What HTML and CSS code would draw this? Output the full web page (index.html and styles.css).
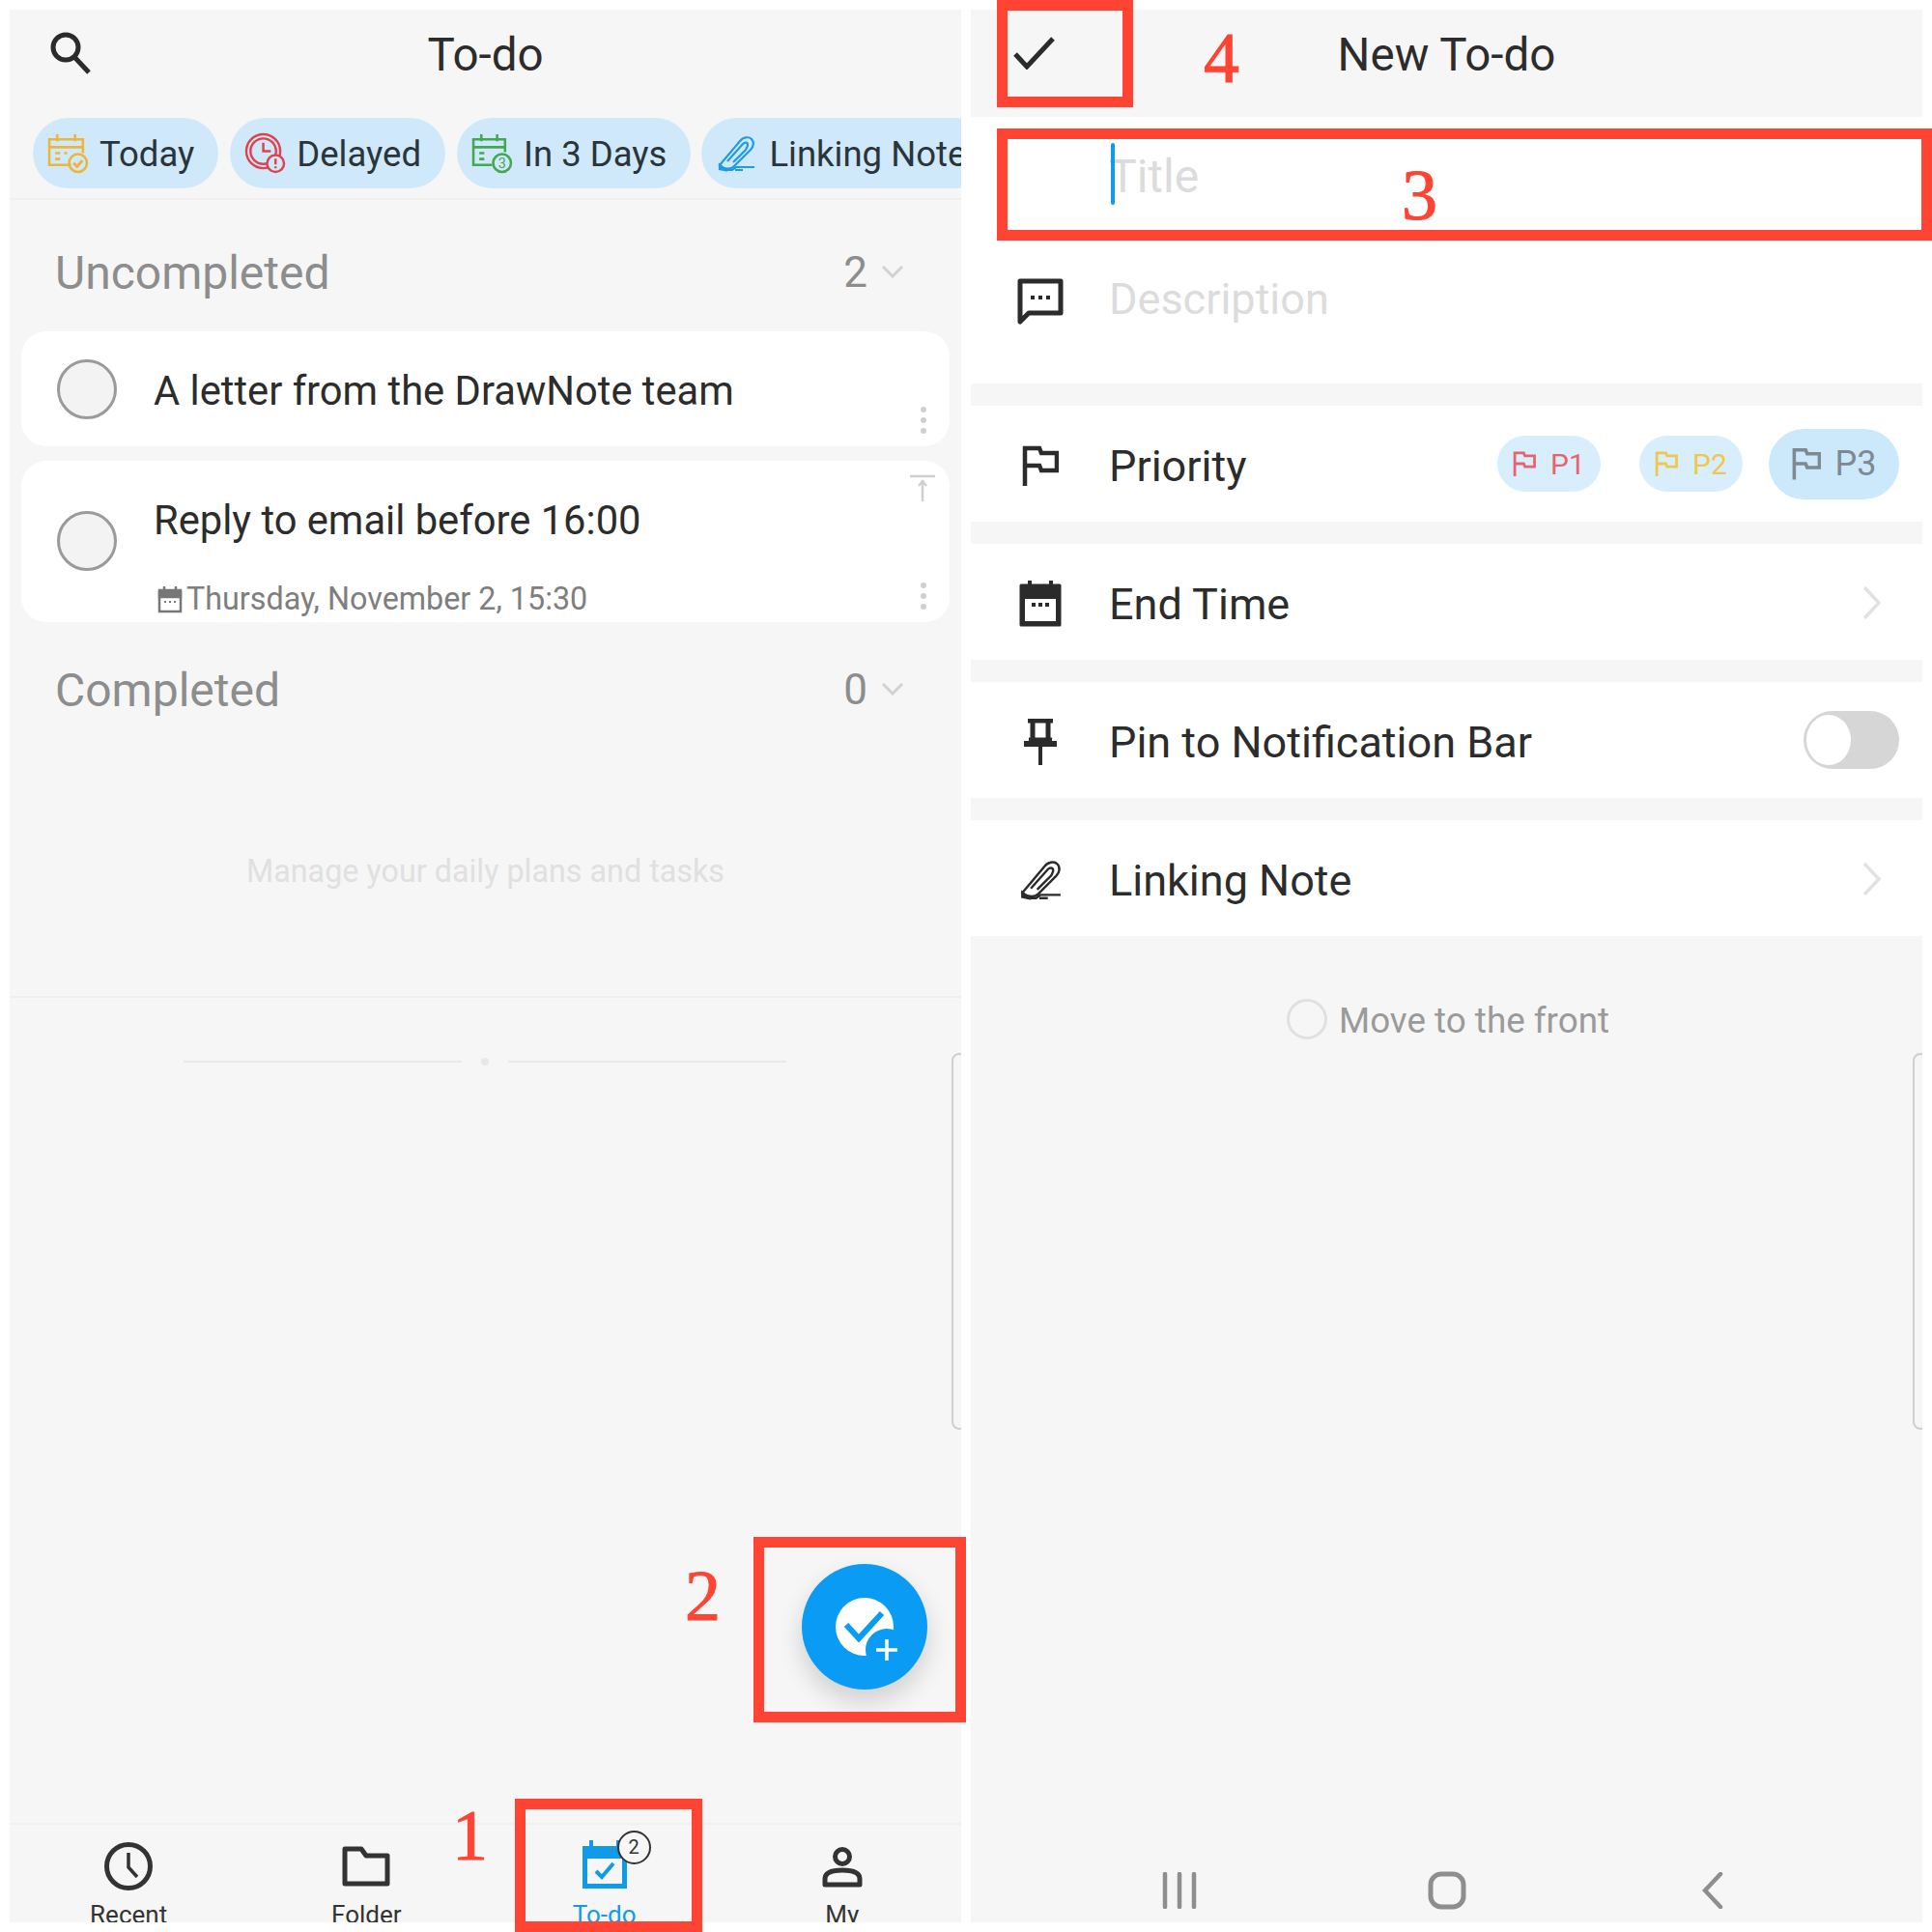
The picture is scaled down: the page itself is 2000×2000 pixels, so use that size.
FILE: index.html
```html
<!DOCTYPE html>
<html lang="en">
<head>
    <meta charset="UTF-8">
    <meta name="viewport" content="width=device-width, initial-scale=1.0">
    <title>To-do</title>
    <link rel="stylesheet" href="styles.css">
</head>
<body>
    <!-- To-do list screen -->
    <div class="panel">
        <div class="top-bar">
            <svg class="search-icon" width="44" height="44" viewBox="0 0 44 44" fill="none" stroke="#2b2b2b" stroke-width="5"><circle cx="16" cy="16" r="13"/><path d="M25 26l15 16"/></svg>
            <h1 class="top-title">To-do</h1>
        </div>
        <div class="chips">
            <div class="chip">
                <svg width="43" height="43" viewBox="0 0 42 42" fill="none" stroke="#ecb63a" stroke-width="2.5"><path d="M24 33H2V7h34v14M2 15h34M10 2v7M28 2v7M8 21h5M8 27h5M17 21h3"/><circle cx="31" cy="31" r="9"/><path d="M26.500 31l3.500 3.500 5.500-6" stroke-width="3"/></svg>
                <span>Today</span>
            </div>
            <div class="chip">
                <svg width="43" height="43" viewBox="0 0 44 44" fill="none" stroke="#e0414f" stroke-width="2.500"><circle cx="20" cy="20" r="18"/><circle cx="20" cy="20" r="13.500"/><path d="M20 11v9h8"/><circle cx="33" cy="33" r="9" fill="#cfe9fb"/><path d="M33 28v6M33 36v2"/></svg>
                <span>Delayed</span>
            </div>
            <div class="chip">
                <svg width="43" height="43" viewBox="0 0 42 42" fill="none" stroke="#43a84f" stroke-width="2.500"><path d="M21 33H2V7h32v13M2 15h32M10 2v7M26 2v7M8 21h5M8 27h5"/><circle cx="31" cy="31" r="9"/><text x="31" y="36" class="chip-three">3</text></svg>
                <span>In 3 Days</span>
            </div>
            <div class="chip chip-note">
                <svg width="40" height="38" viewBox="0 0 40 38" fill="none" stroke="#1e9be6" stroke-width="2.200"><path d="M3 31L24 6c3-4 9-5 12-2 3 3 2 8-1 11L18 32c-3 3-9 4-15-1z"/><path d="M11 27L27 9c2-2 5-2 5 1 0 2-1 3-2 5L17 28"/><path d="M3 31l5 5-5-1z" fill="#1e9be6"/><path d="M8 36h8l4-3h19M19 36h8"/></svg>
                <span>Linking Note</span>
            </div>
        </div>

        <div class="list-area">
            <div class="section-head section-first">
                <span class="section-name">Uncompleted</span>
                <span class="section-count">2</span>
                <svg class="section-arrow" width="24" height="14" viewBox="0 0 24 14" fill="none" stroke="#d2d2d2" stroke-width="3"><path d="M2 2l10 10L22 2"/></svg>
            </div>

            <div class="task task-short">
                <span class="task-circle"></span>
                <div class="task-body">
                    <div class="task-text">A letter from the DrawNote team</div>
                </div>
                <span class="kebab"><i></i><i></i><i></i></span>
            </div>

            <div class="task task-tall">
                <span class="task-circle"></span>
                <div class="task-body">
                    <div class="task-text">Reply to email before 16:00</div>
                    <div class="task-date">
                        <svg width="26" height="30" viewBox="0 0 26 30" fill="none" stroke="#777" stroke-width="2.500"><path d="M2 8h22v20H2z"/><path d="M2 6h22v7H2z" fill="#777"/><path d="M7 2v5M19 2v5"/><path d="M7 18h2M12 18h2M17 18h2" stroke-width="2"/></svg>
                        <span>Thursday, November 2, 15:30</span>
                    </div>
                </div>
                <svg class="move-top" width="26" height="28" viewBox="0 0 26 28" fill="none" stroke="#d0d0d0" stroke-width="2.500"><path d="M0 2h26M13 28V8M9 12l4-5 4 5"/></svg>
                <span class="kebab"><i></i><i></i><i></i></span>
            </div>

            <div class="section-head section-second">
                <span class="section-name">Completed</span>
                <span class="section-count">0</span>
                <svg class="section-arrow" width="24" height="14" viewBox="0 0 24 14" fill="none" stroke="#d2d2d2" stroke-width="3"><path d="M2 2l10 10L22 2"/></svg>
            </div>

            <p class="empty-hint">Manage your daily plans and tasks</p>
            <div class="list-line"></div>
            <div class="end-mark"><span></span><i></i><span></span></div>
        </div>

        <div class="tabbar">
            <div class="tab">
                <svg width="50" height="50" viewBox="0 0 50 50" fill="none" stroke="#333" stroke-width="5"><circle cx="25" cy="25" r="22.500"/><path d="M25 11v15l9 10" stroke-width="3.500"/></svg>
                <span>Recent</span>
            </div>
            <div class="tab">
                <svg width="50" height="50" viewBox="0 0 50 50" fill="none" stroke="#333" stroke-width="5"><path d="M3 7h17l5 7h22v29H3z" stroke-linejoin="round"/></svg>
                <span>Folder</span>
            </div>
            <div class="tab tab-active">
                <svg width="50" height="52" viewBox="0 0 50 52" fill="none"><path d="M11 1v8M39 1v8" stroke="#0f9be8" stroke-width="4"/><path d="M2 7h46v44H2z" fill="#0f9be8"/><path d="M7 20h36v26H7z" fill="#f6f6f6"/><path d="M16 33l6 6 12-14" stroke="#0f9be8" stroke-width="4"/></svg>
                <span>To-do</span>
                <b class="tab-badge">2</b>
            </div>
            <div class="tab tab-me">
                <svg width="42" height="42" viewBox="0 0 42 42" fill="none" stroke="#333" stroke-width="5"><circle cx="21" cy="10" r="7.500"/><path d="M3 39v-6c0-5 5-9 18-9s18 4 18 9v6z" stroke-linejoin="round"/></svg>
                <span>My</span>
            </div>
        </div>

        <div class="fab">
            <svg width="130" height="130" viewBox="0 0 130 130" fill="none"><circle cx="65" cy="65" r="30" fill="#fff"/><path d="M46 63l13 14 24-26" stroke="#0a9cf5" stroke-width="6"/><circle cx="88" cy="89" r="22" fill="#0a9cf5"/><path d="M88 78v22M77 89h22" stroke="#fff" stroke-width="3.500"/></svg>
        </div>
        <span class="edge-handle"></span>
    </div>

    <!-- New to-do screen -->
    <div class="panel">
        <div class="top-bar">
            <svg class="save-icon" width="44" height="34" viewBox="0 0 44 34" fill="none" stroke="#2b2b2b" stroke-width="5"><path d="M2 18l12 13L41 2"/></svg>
            <h1 class="top-title">New To-do</h1>
        </div>

        <div class="form-head">
            <div class="title-field"><span class="caret"></span><span class="muted">Title</span></div>
            <div class="form-line"></div>
            <div class="desc-row">
                <svg width="48" height="48" viewBox="0 0 48 48" fill="none" stroke="#2b2b2b" stroke-width="5"><path d="M3 3h42v33H12l-9 9z" stroke-linejoin="round"/><path d="M14 20h4M22 20h4M30 20h4" stroke-width="4"/></svg>
                <span class="muted">Description</span>
            </div>
        </div>

        <div class="form-row">
            <span class="row-icon"><svg width="38" height="42" viewBox="0 0 38 42" fill="none" stroke="#2b2b2b" stroke-width="4.500"><path d="M3 42V3h15l2 5h16v18H20l-2-5H3"/></svg></span>
            <span class="row-label">Priority</span>
            <div class="prio-group">
                <span class="prio prio-red"><svg width="24" height="26" viewBox="0 0 38 42" fill="none" stroke="currentColor" stroke-width="4.500"><path d="M3 42V3h15l2 5h16v18H20l-2-5H3"/></svg>P1</span>
                <span class="prio prio-yellow"><svg width="24" height="26" viewBox="0 0 38 42" fill="none" stroke="currentColor" stroke-width="4.500"><path d="M3 42V3h15l2 5h16v18H20l-2-5H3"/></svg>P2</span>
                <span class="prio prio-gray"><svg width="30" height="34" viewBox="0 0 38 42" fill="none" stroke="currentColor" stroke-width="4.500"><path d="M3 42V3h15l2 5h16v18H20l-2-5H3"/></svg>P3</span>
            </div>
        </div>

        <div class="form-row">
            <span class="row-icon"><svg width="44" height="48" viewBox="0 0 44 48" fill="none"><path d="M11 0v8M33 0v8" stroke="#2b2b2b" stroke-width="4"/><path d="M2 5h40v41H2z" fill="#2b2b2b" stroke="#2b2b2b" stroke-width="3" stroke-linejoin="round"/><path d="M6 19h32v23H6z" fill="#fff"/><path d="M13 25h4M20 25h4M27 25h4" stroke="#2b2b2b" stroke-width="4"/></svg></span>
            <span class="row-label">End Time</span>
            <svg class="row-chevron" width="20" height="34" viewBox="0 0 20 34" fill="none" stroke="#e2e2e2" stroke-width="3.500"><path d="M2 1l15 16L2 33"/></svg>
        </div>

        <div class="form-row">
            <span class="row-icon"><svg width="36" height="48" viewBox="0 0 36 48" fill="none" stroke="#2b2b2b"><path d="M5 2h26" stroke-width="5"/><path d="M10 2v18M26 2v18" stroke-width="5"/><path d="M1 26h34" stroke-width="6"/><path d="M6 22h24" stroke-width="5"/><path d="M18 26v22" stroke-width="4"/></svg></span>
            <span class="row-label">Pin to Notification Bar</span>
            <span class="toggle"><span class="toggle-knob"></span></span>
        </div>

        <div class="form-row form-row-last">
            <span class="row-icon"><svg width="44" height="42" viewBox="0 0 40 38" fill="none" stroke="#2b2b2b" stroke-width="2.200"><path d="M3 31L24 6c3-4 9-5 12-2 3 3 2 8-1 11L18 32c-3 3-9 4-15-1z"/><path d="M11 27L27 9c2-2 5-2 5 1 0 2-1 3-2 5L17 28"/><path d="M3 31l5 5-5-1z" fill="#2b2b2b"/><path d="M8 36h8l4-3h19M19 36h8"/></svg></span>
            <span class="row-label">Linking Note</span>
            <svg class="row-chevron" width="20" height="34" viewBox="0 0 20 34" fill="none" stroke="#e2e2e2" stroke-width="3.500"><path d="M2 1l15 16L2 33"/></svg>
        </div>

        <div class="front-option"><span class="front-circle"></span><span class="front-text">Move to the front</span></div>

        <div class="navbar">
            <svg width="36" height="38" viewBox="0 0 36 38" fill="none" stroke="#8e8e8e" stroke-width="4.500" stroke-linecap="round"><path d="M3 2v34M18 2v34M33 2v34"/></svg>
            <svg class="nav-home" width="40" height="40" viewBox="0 0 40 40" fill="none" stroke="#8e8e8e" stroke-width="5"><rect x="3" y="3" width="34" height="34" rx="11"/></svg>
            <svg width="22" height="38" viewBox="0 0 22 38" fill="none" stroke="#8e8e8e" stroke-width="4.500" stroke-linecap="round"><path d="M19 2L3 19l16 17"/></svg>
        </div>
        <span class="edge-handle"></span>
    </div>

    <!-- Red tutorial marks drawn over the screenshots -->
    <div class="mark mark-tab"></div>
    <div class="mark mark-fab"></div>
    <div class="mark mark-title"></div>
    <div class="mark mark-save"></div>
    <span class="mark-num num-1">1</span>
    <span class="mark-num num-2">2</span>
    <span class="mark-num num-3">3</span>
    <span class="mark-num num-4">4</span>
</body>
</html>
```

FILE: styles.css
```css
* {
    box-sizing: border-box;
}
body {
    position: relative;
    display: flex;
    gap: 10px;
    width: 2000px;
    height: 2000px;
    margin: 0;
    padding: 10px;
    overflow: hidden;
    font-family: Roboto, "Liberation Sans", sans-serif;
    background-color: #fff;
    color: #2c2c2c;
}
.panel {
    position: relative;
    display: flex;
    flex-direction: column;
    width: 985px;
    height: 1980px;
    overflow: hidden;
    background-color: #f6f6f6;
}
svg {
    display: block;
    flex-shrink: 0;
}

/* header */
.top-bar {
    position: relative;
    display: flex;
    align-items: center;
    justify-content: center;
    flex-shrink: 0;
    height: 111px;
}
.top-title {
    margin: 0 0 18px;
    font-size: 47.5px;
    font-weight: 400;
    color: #2c2c2c;
}
.search-icon {
    position: absolute;
    left: 42px;
    top: 23px;
}
.save-icon {
    position: absolute;
    left: 44px;
    top: 28px;
}

/* chips */
.chips {
    display: flex;
    gap: 12px;
    flex-shrink: 0;
    padding: 1px 0 0 24px;
    height: 86px;
    border-bottom: 2px solid #f0f0f0;
}
.chip {
    display: flex;
    align-items: center;
    flex-shrink: 0;
    gap: 11px;
    height: 73px;
    padding: 0 25px 0 15px;
    border-radius: 37px;
    background-color: #cfe9fb;
    font-size: 36.5px;
    color: #2a343b;
}
.chip span {
    margin-top: 2px;
}
.chip-note {
    gap: 14px;
    margin-left: -1px;
    padding-left: 16px;
}
.chip-three {
    font-family: Roboto, sans-serif;
    font-size: 14px;
    text-anchor: middle;
    fill: #43a84f;
    stroke: none;
}

/* task list */
.list-area {
    display: flex;
    flex-direction: column;
}
.section-head {
    display: flex;
    align-items: center;
    height: 50px;
    padding: 0 59px 0 47px;
    color: #8d8d8d;
}
.section-first {
    margin-top: 50px;
}
.section-second {
    margin-top: 45px;
}
.section-name {
    flex: 1;
    font-size: 48px;
}
.section-count {
    margin-right: 14px;
    font-size: 44px;
}
.section-arrow {
    margin-bottom: 2px;
}
.task {
    position: relative;
    display: flex;
    margin: 0 12px;
    padding-left: 37px;
    border-radius: 26px;
    background-color: #fff;
}
.task-short {
    margin-top: 36px;
    height: 119px;
}
.task-tall {
    margin-top: 15px;
    height: 167px;
}
.task-circle {
    flex-shrink: 0;
    width: 62px;
    height: 62px;
    border: 3px solid #9a9a9a;
    border-radius: 50%;
    background-color: #f3f3f3;
}
.task-short .task-circle {
    margin-top: 29px;
}
.task-tall .task-circle {
    margin-top: 52px;
}
.task-body {
    margin-left: 38px;
}
.task-text {
    font-size: 41.7px;
    line-height: 50px;
    white-space: nowrap;
}
.task-short .task-text {
    margin-top: 37px;
}
.task-tall .task-text {
    margin-top: 37px;
}
.task-date {
    display: flex;
    align-items: center;
    gap: 4px;
    margin: 37px 0 0 4px;
    font-size: 32.3px;
    color: #7e7e7e;
}
.kebab {
    position: absolute;
    right: 24px;
    bottom: 13px;
    display: flex;
    flex-direction: column;
    gap: 5px;
}
.kebab i {
    width: 6px;
    height: 6px;
    border-radius: 50%;
    background-color: #cfcfcf;
}
.move-top {
    position: absolute;
    right: 15px;
    top: 14px;
}
.empty-hint {
    margin: 143px 0 0;
    font-size: 32.3px;
    line-height: 40px;
    text-align: center;
    color: #e0e0e0;
}
.list-line {
    height: 2px;
    margin-top: 109px;
    background-color: #eeeeee;
}
.end-mark {
    display: flex;
    align-items: center;
    gap: 20px;
    margin: 62px 0 0 180px;
}
.end-mark span {
    width: 288px;
    height: 2px;
    background-color: #e8e8e8;
}
.end-mark i {
    width: 8px;
    height: 8px;
    border-radius: 50%;
    background-color: #e8e8e8;
}

/* bottom tabs */
.tabbar {
    position: relative;
    display: flex;
    flex-shrink: 0;
    height: 103px;
    margin-top: auto;
    border-top: 2px solid #f0f0f0;
}
.tab {
    position: relative;
    display: flex;
    flex-direction: column;
    align-items: center;
    flex: 1;
    padding-top: 18px;
    font-size: 26px;
    color: #333;
}
.tab span {
    position: absolute;
    top: 78px;
    line-height: 30px;
}
.tab-active {
    padding-top: 15px;
    color: #0f9be8;
}
.tab-me {
    padding-top: 23px;
}
.tab-badge {
    position: absolute;
    left: 136px;
    top: 6px;
    width: 35px;
    height: 35px;
    border: 2px solid #333;
    border-radius: 50%;
    background-color: #f6f6f6;
    font-size: 20px;
    font-weight: 400;
    line-height: 31px;
    text-align: center;
    color: #333;
}
.fab {
    position: absolute;
    left: 820px;
    top: 1609px;
    width: 130px;
    height: 130px;
    border-radius: 50%;
    background-color: #0a9cf5;
    box-shadow: 0 12px 26px rgba(0, 0, 0, 0.16);
}
.edge-handle {
    position: absolute;
    right: -6px;
    top: 1080px;
    width: 16px;
    height: 390px;
    border: 2px solid #cfcfcf;
    border-radius: 14px;
}

/* new to-do form */
.form-head {
    flex-shrink: 0;
    height: 276px;
    background-color: #fff;
}
.title-field {
    position: relative;
    display: flex;
    align-items: center;
    height: 122px;
    padding: 0 0 0 143px;
    font-size: 48px;
}
.caret {
    position: absolute;
    left: 145px;
    top: 27px;
    width: 4px;
    height: 64px;
    border-radius: 2px;
    background-color: #0f9be8;
}
.muted {
    color: #dcdcdc;
}
.form-line {
    height: 2px;
    margin: 0 49px;
    background-color: #eeeeee;
}
.desc-row {
    display: flex;
    align-items: center;
    gap: 47px;
    padding: 38px 0 0 48px;
    font-size: 45px;
}
.desc-row svg {
    margin-top: 4px;
}
.form-row {
    display: flex;
    align-items: center;
    flex-shrink: 0;
    height: 120px;
    margin-top: 23px;
    padding-right: 24px;
    background-color: #fff;
    font-size: 45px;
}
.row-icon {
    display: flex;
    justify-content: center;
    width: 143px;
    padding-top: 4px;
}
.row-label {
    flex: 1;
    padding-top: 4px;
}
.row-chevron {
    margin: 2px 18px 0 0;
}
.prio-group {
    display: flex;
    align-items: center;
    gap: 40px;
}
.prio {
    display: flex;
    align-items: center;
    justify-content: center;
    gap: 15px;
    width: 107px;
    height: 58px;
    border-radius: 29px;
    background-color: #d9eefc;
    font-size: 30px;
}
.prio-red {
    color: #e8636f;
}
.prio-yellow {
    color: #edc84f;
}
.prio-gray {
    width: 135px;
    height: 73px;
    margin-left: -13px;
    border-radius: 37px;
    background-color: #cce8fb;
    font-size: 36px;
    color: #7d8a92;
}
.toggle {
    display: flex;
    align-items: center;
    width: 99px;
    height: 60px;
    padding-left: 3px;
    border-radius: 30px;
    background-color: #d6d6d6;
}
.toggle-knob {
    width: 46px;
    height: 52px;
    border-radius: 50%;
    background-color: #fff;
}
.front-option {
    display: flex;
    align-items: center;
    gap: 12px;
    margin: 62px 0 0 327px;
    font-size: 36.8px;
    color: #9a9a9a;
}
.front-text {
    margin-top: 4px;
}
.front-circle {
    width: 42px;
    height: 42px;
    border: 3px solid #e0e0e0;
    border-radius: 50%;
}
.navbar {
    display: flex;
    align-items: center;
    justify-content: space-between;
    margin-top: auto;
    height: 66px;
    padding: 0 206px 0 198px;
}
.nav-home {
    margin-right: 6px;
}

/* tutorial marks */
.mark {
    position: absolute;
    border: 11px solid #ff4433;
}
.mark-tab {
    left: 533px;
    top: 1862px;
    width: 194px;
    height: 138px;
}
.mark-fab {
    left: 780px;
    top: 1591px;
    width: 220px;
    height: 192px;
}
.mark-title {
    left: 1032px;
    top: 133px;
    width: 968px;
    height: 116px;
}
.mark-save {
    left: 1032px;
    top: 0;
    width: 141px;
    height: 111px;
}
.mark-num {
    position: absolute;
    font-family: "Liberation Serif", serif;
    font-size: 74px;
    line-height: 1;
    color: #ff4433;
    -webkit-text-stroke: 1px #ff4433;
}
.num-1 {
    left: 468px;
    top: 1863px;
}
.num-2 {
    left: 709px;
    top: 1615px;
}
.num-3 {
    left: 1451px;
    top: 165px;
}
.num-4 {
    left: 1246px;
    top: 23px;
}
```
